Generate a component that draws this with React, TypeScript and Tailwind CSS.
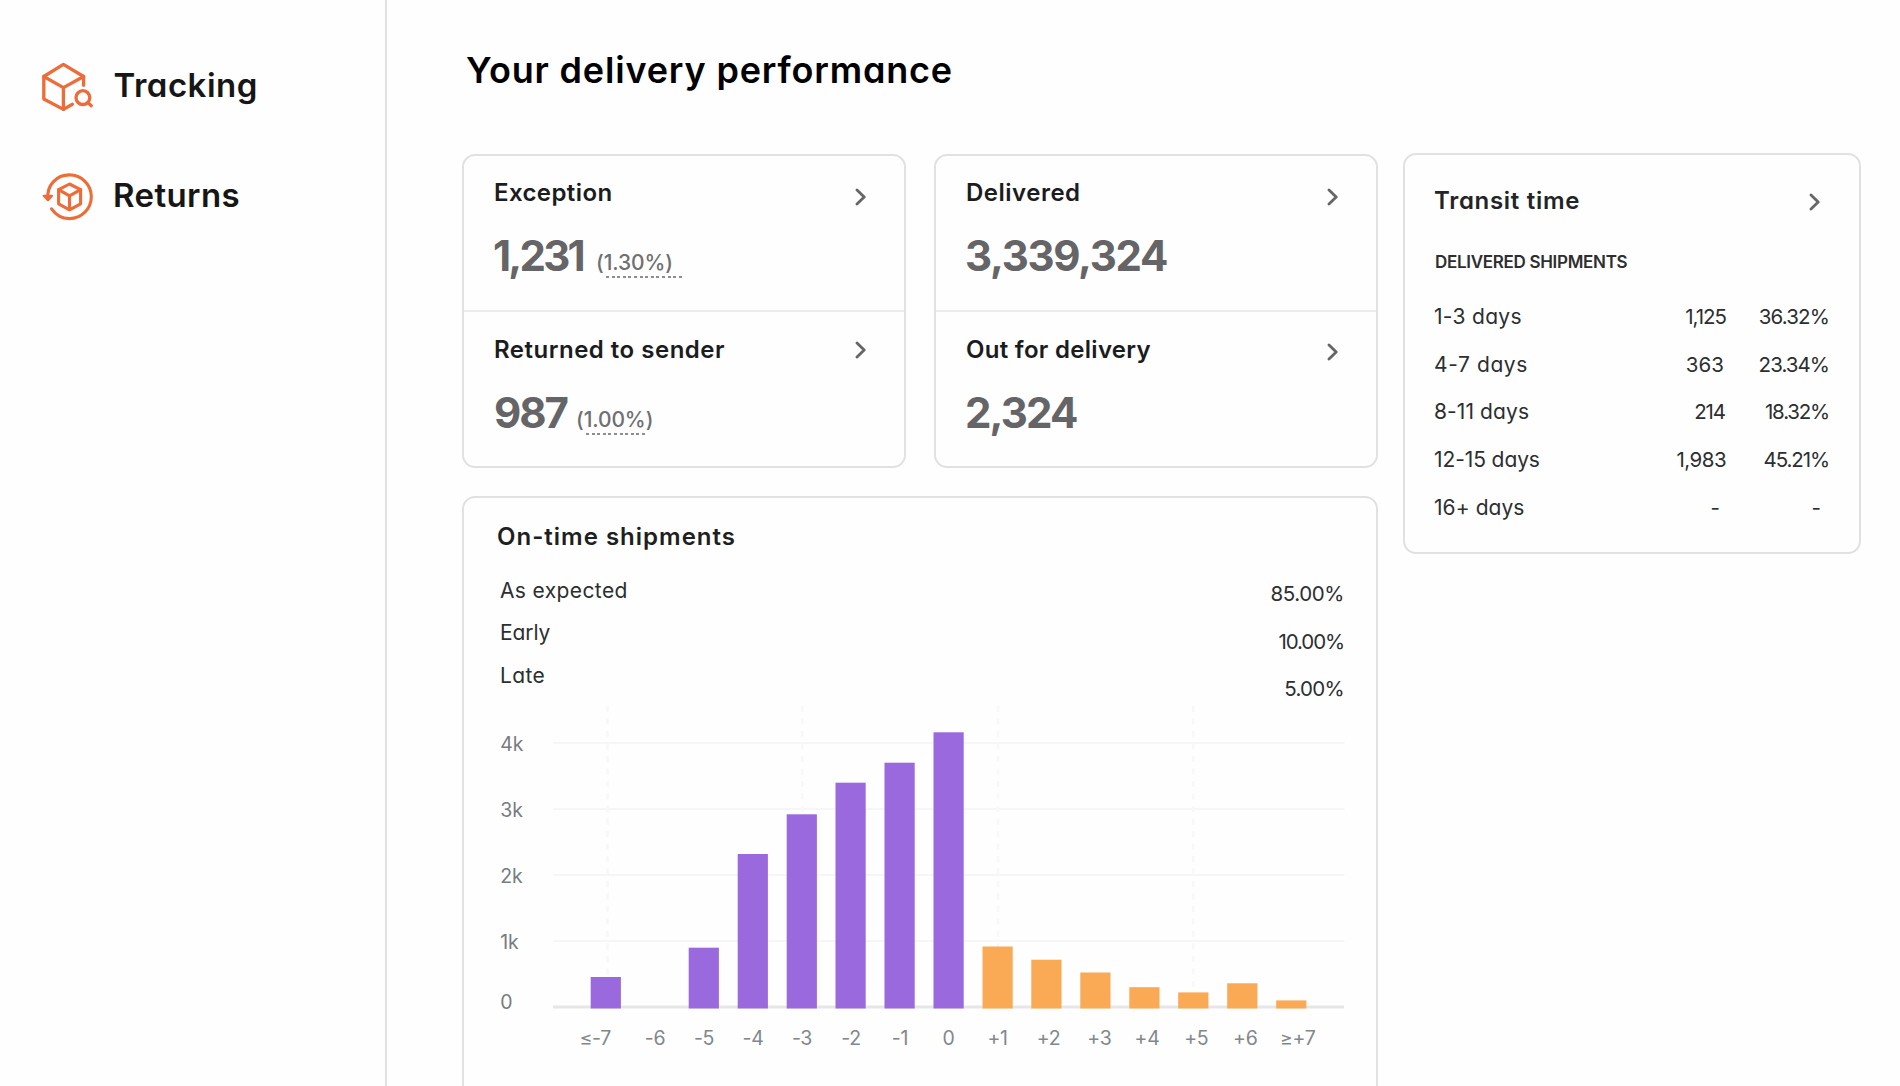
import type { ReactNode } from "react";

function TrackingIcon() {
  return (
    <svg viewBox="41 61 54 52" className="h-[52px] w-[54px] shrink-0" fill="none" stroke="#ee6c38" strokeWidth="3.3" strokeLinecap="round" strokeLinejoin="round">
      <path d="M83.6 85.3V76.5L63.4 64.4L43.8 76.5V99L63.4 109.4L72.4 104.3" />
      <path d="M43.8 76.5L63.4 87.6L83.6 76.5M63.4 87.6V109.4" />
      <circle cx="82.9" cy="97.6" r="6.9" />
      <path d="M87.9 102.6L91.3 105.7" />
    </svg>
  );
}

function ReturnsIcon() {
  return (
    <svg viewBox="41 171 54 52" className="h-[52px] w-[54px] shrink-0" fill="none" stroke="#ee6c38" strokeWidth="3.1" strokeLinecap="round" strokeLinejoin="round">
      <path d="M48 199C46.3 185.5 56.5 174.9 69.5 174.9C81.6 174.9 91.3 184.7 91.3 196.8C91.3 208.8 81.6 218.6 69.5 218.6C62.3 218.6 55.6 214.8 51.6 208.9" />
      <path d="M43.7 195.8L48 200.2L52 195.8Z" fill="#ee6c38" strokeWidth="2.2" />
      <path d="M69.5 184L80.6 189.7V203.8L69.5 209.8L58.6 203.8V189.7Z" />
      <path d="M58.6 189.7L69.5 195.8L80.6 189.7M69.5 195.8V209.8" />
    </svg>
  );
}

function Chevron({ className }: { className: string }) {
  return (
    <svg viewBox="0 0 12 18" className={`h-[18px] w-3 shrink-0 ${className}`} fill="none" stroke="#666567" strokeWidth="2.8" strokeLinecap="round" strokeLinejoin="round">
      <path d="M2 1.9L9.2 9L2 16.1" />
    </svg>
  );
}

function NavItem({ icon, children }: { icon: ReactNode; children: ReactNode }) {
  return (
    <a className="flex h-[52px] items-center pl-[41px]">
      {icon}
      {children}
    </a>
  );
}

function Rate({ children, underline }: { children: ReactNode; underline: string }) {
  return (
    <span className="relative -top-px text-[21px] leading-6 font-medium tracking-[-0.1px] text-[#706f71]">
      {children}
      <span className={`absolute top-[25px] left-[10px] h-[2px] bg-[repeating-linear-gradient(90deg,#8d8c8e_0_3px,transparent_3px_5.6px)] ${underline}`} />
    </span>
  );
}

interface StatProps {
  title: ReactNode;
  value: ReactNode;
  chevron: string;
  rate?: ReactNode;
  className: string;
}

function Stat({ title, value, chevron, rate, className }: StatProps) {
  return (
    <section className={`pl-[30px] pr-[37px] ${className}`}>
      <div className="flex h-7 items-start justify-between text-[24px] leading-7 font-semibold text-[#1b1c1e]">
        {title}
        <Chevron className={chevron} />
      </div>
      <div className="mt-[25px] flex items-baseline text-[42px] leading-[48px] font-bold text-[#656466]">
        {value}
        {rate}
      </div>
    </section>
  );
}

const transit = [
  { label: "1-3 days", ls: "tracking-[0.29px]", count: "1,125", cls: "tracking-[-1px] pr-[2px]", pct: "36.32%", pls: "tracking-[-0.85px]" },
  { label: "4-7 days", ls: "tracking-[0.6px]", count: "363", cls: "tracking-[0.1px] pr-[4px]", pct: "23.34%", pls: "tracking-[-0.95px]" },
  { label: "8-11 days", ls: "tracking-[0.09px]", count: "214", cls: "tracking-[-1.1px] pr-[3px]", pct: "18.32%", pls: "tracking-[-1.2px]" },
  { label: "12-15 days", ls: "tracking-[-0.1px]", count: "1,983", cls: "tracking-[-0.55px] pr-[2px]", pct: "45.21%", pls: "tracking-[-1.1px]" },
  { label: "16+ days", ls: "tracking-[0.07px]", count: "-", cls: "pr-[8px]", pct: "-", pls: "pr-[8px]" },
];

const gridRows = [
  { label: "4k", y: 743, text: 751 },
  { label: "3k", y: 809, text: 817 },
  { label: "2k", y: 875, text: 883 },
  { label: "1k", y: 941, text: 949 },
];

const bars = [
  { label: "≤-7", cx: 595.3, x: 590.7, top: 977 },
  { label: "-6", cx: 655, x: 640, top: 1008.5 },
  { label: "-5", cx: 704, x: 688.7, top: 947.7 },
  { label: "-4", cx: 753, x: 737.7, top: 854 },
  { label: "-3", cx: 802, x: 786.7, top: 814.3 },
  { label: "-2", cx: 851, x: 835.5, top: 782.7 },
  { label: "-1", cx: 900, x: 884.5, top: 762.7 },
  { label: "0", cx: 948.6, x: 933.5, top: 732.3 },
  { label: "+1", cx: 997.6, x: 982.5, top: 946.5 },
  { label: "+2", cx: 1048.6, x: 1031.3, top: 959.7 },
  { label: "+3", cx: 1099.4, x: 1080.3, top: 972.5 },
  { label: "+4", cx: 1147, x: 1129.3, top: 987.2 },
  { label: "+5", cx: 1196.3, x: 1178.2, top: 992.4 },
  { label: "+6", cx: 1245.3, x: 1227.2, top: 983.3 },
  { label: "≥+7", cx: 1297.7, x: 1276.2, top: 1000.4 },
];

function ShipmentsChart() {
  return (
    <svg viewBox="464 700 912 386" className="h-[386px] w-[912px] shrink-0" fontSize="19.5">
      {gridRows.map((g) => (
        <g key={g.label}>
          <line x1="553" x2="1344.5" y1={g.y} y2={g.y} stroke="#f6f6f7" strokeWidth="2.2" />
          <text x="500.3" y={g.text} fill="#777b80" letterSpacing="-0.2">{g.label}</text>
        </g>
      ))}
      {[607.5, 802.3, 998, 1193.3].map((x) => (
        <line key={x} x1={x} x2={x} y1="706" y2="1004" stroke="#f8f8f9" strokeWidth="2.6" strokeDasharray="6 6.5" />
      ))}
      <line x1="553" x2="1344" y1="1007" y2="1007" stroke="#e6e6e7" strokeWidth="3" />
      <text x="500.3" y="1008.7" fill="#777b80">0</text>
      {bars.map((b, i) => (
        <g key={b.label}>
          <rect x={b.x} y={b.top} width="30.2" height={1008.5 - b.top} fill={i < 8 ? "#9b69de" : "#faa955"} />
          <text x={b.cx} y="1045.3" fill="#83878b" textAnchor="middle" letterSpacing="-0.3">{b.label}</text>
        </g>
      ))}
    </svg>
  );
}

export default function App() {
  return (
    <div className="flex h-[1086px] w-[1900px] overflow-hidden bg-[#fefefe] font-['Inter',sans-serif] whitespace-nowrap [font-feature-settings:'cv11']">
      <aside className="flex w-[387px] shrink-0 flex-col gap-[58px] border-r-2 border-[#e1e1e2] pt-[61px] text-[33px] leading-10 font-semibold text-[#161616]">
        <NavItem icon={<TrackingIcon />}>
          <span className="-mt-[5px] ml-[18.5px] tracking-[0.5px]">Tracking</span>
        </NavItem>
        <NavItem icon={<ReturnsIcon />}>
          <span className="-mt-[4px] ml-[18px] tracking-[0.4px]">Returns</span>
        </NavItem>
      </aside>

      <main className="pt-12 pl-[75px]">
        <h1 className="pl-[4px] text-[36px] leading-[44px] font-semibold tracking-[0.82px] text-black">Your delivery performance</h1>

        <div className="mt-[61px] flex items-start gap-[25px]">
          <div className="mt-px flex w-[916px] flex-col gap-7">
            <div className="flex justify-between">
              <div className="h-[314px] w-[444px] rounded-[13px] border-2 border-[#e1e1e2]">
                <Stat
                  className="h-[154px] pt-[23px]"
                  title={<span className="tracking-[0.4px]">Exception</span>}
                  chevron="mt-[9px]"
                  value={<span className="w-[103px] -ml-px tracking-[-2.8px]">1,231</span>}
                  rate={<Rate underline="w-[78px]">(1.30%)</Rate>}
                />
                <Stat
                  className="h-[156px] border-t-2 border-[#ececed] pt-[24px]"
                  title={<span className="tracking-[0.5px]">Returned to sender</span>}
                  chevron="mt-[5px]"
                  value={<span className="w-[82px] tracking-[-2.06px]">987</span>}
                  rate={<Rate underline="w-[62px]">(1.00%)</Rate>}
                />
              </div>

              <div className="h-[314px] w-[444px] rounded-[13px] border-2 border-[#e1e1e2]">
                <Stat
                  className="h-[154px] pt-[23px]"
                  title={<span className="tracking-[0.5px]">Delivered</span>}
                  chevron="mt-[9px]"
                  value={<span className="-ml-px tracking-[-1.32px]">3,339,324</span>}
                />
                <Stat
                  className="h-[156px] border-t-2 border-[#ececed] pt-[24px]"
                  title={<span className="tracking-[0.3px]">Out for delivery</span>}
                  chevron="mt-[7px]"
                  value={<span className="-ml-px tracking-[-1.86px]">2,324</span>}
                />
              </div>
            </div>

            <section className="h-[640px] rounded-[13px] border-2 border-[#e1e1e2] pt-[25px] text-[21px] text-[#2d2e30]">
              <h2 className="pl-[33px] text-[24px] leading-7 font-semibold tracking-[1px] text-[#1e1f21]">On-time shipments</h2>
              <div className="mt-[19px] flex h-[130px] items-start justify-between pr-[32px] pl-[36px]">
                <div className="flex flex-col leading-[42.3px]">
                  <span className="tracking-[0.38px]">As expected</span>
                  <span className="tracking-[-0.1px]">Early</span>
                  <span className="tracking-[0.39px]">Late</span>
                </div>
                <div className="flex flex-col text-right text-[20.5px] leading-[47.7px]">
                  <span className="tracking-[-0.4px]">85.00%</span>
                  <span className="tracking-[-1.1px]">10.00%</span>
                  <span className="tracking-[-0.7px]">5.00%</span>
                </div>
              </div>
              <ShipmentsChart />
            </section>
          </div>

          <section className="h-[401px] w-[458px] rounded-[13px] border-2 border-[#e1e1e2] pt-8 pl-[29px] text-[#2d2e30]">
            <div className="flex h-7 items-start justify-between pr-[38px] text-[24px] leading-7 font-semibold text-[#232426]">
              <h2 className="tracking-[0.7px]">Transit time</h2>
              <Chevron className="mt-[6px]" />
            </div>
            <h3 className="mt-[35px] pl-px text-[17px] leading-6 font-semibold tracking-[-0.3px]">DELIVERED SHIPMENTS</h3>
            <div className="mt-[19px] pr-[30px] text-[21px] leading-[47.7px]">
              {transit.map((row) => (
                <div key={row.label} className="flex">
                  <span className={`flex-1 ${row.ls}`}>{row.label}</span>
                  <span className={`text-right text-[20.5px] ${row.cls}`}>{row.count}</span>
                  <span className={`w-[101px] text-right text-[20.5px] ${row.pls}`}>{row.pct}</span>
                </div>
              ))}
            </div>
          </section>
        </div>
      </main>
    </div>
  );
}
